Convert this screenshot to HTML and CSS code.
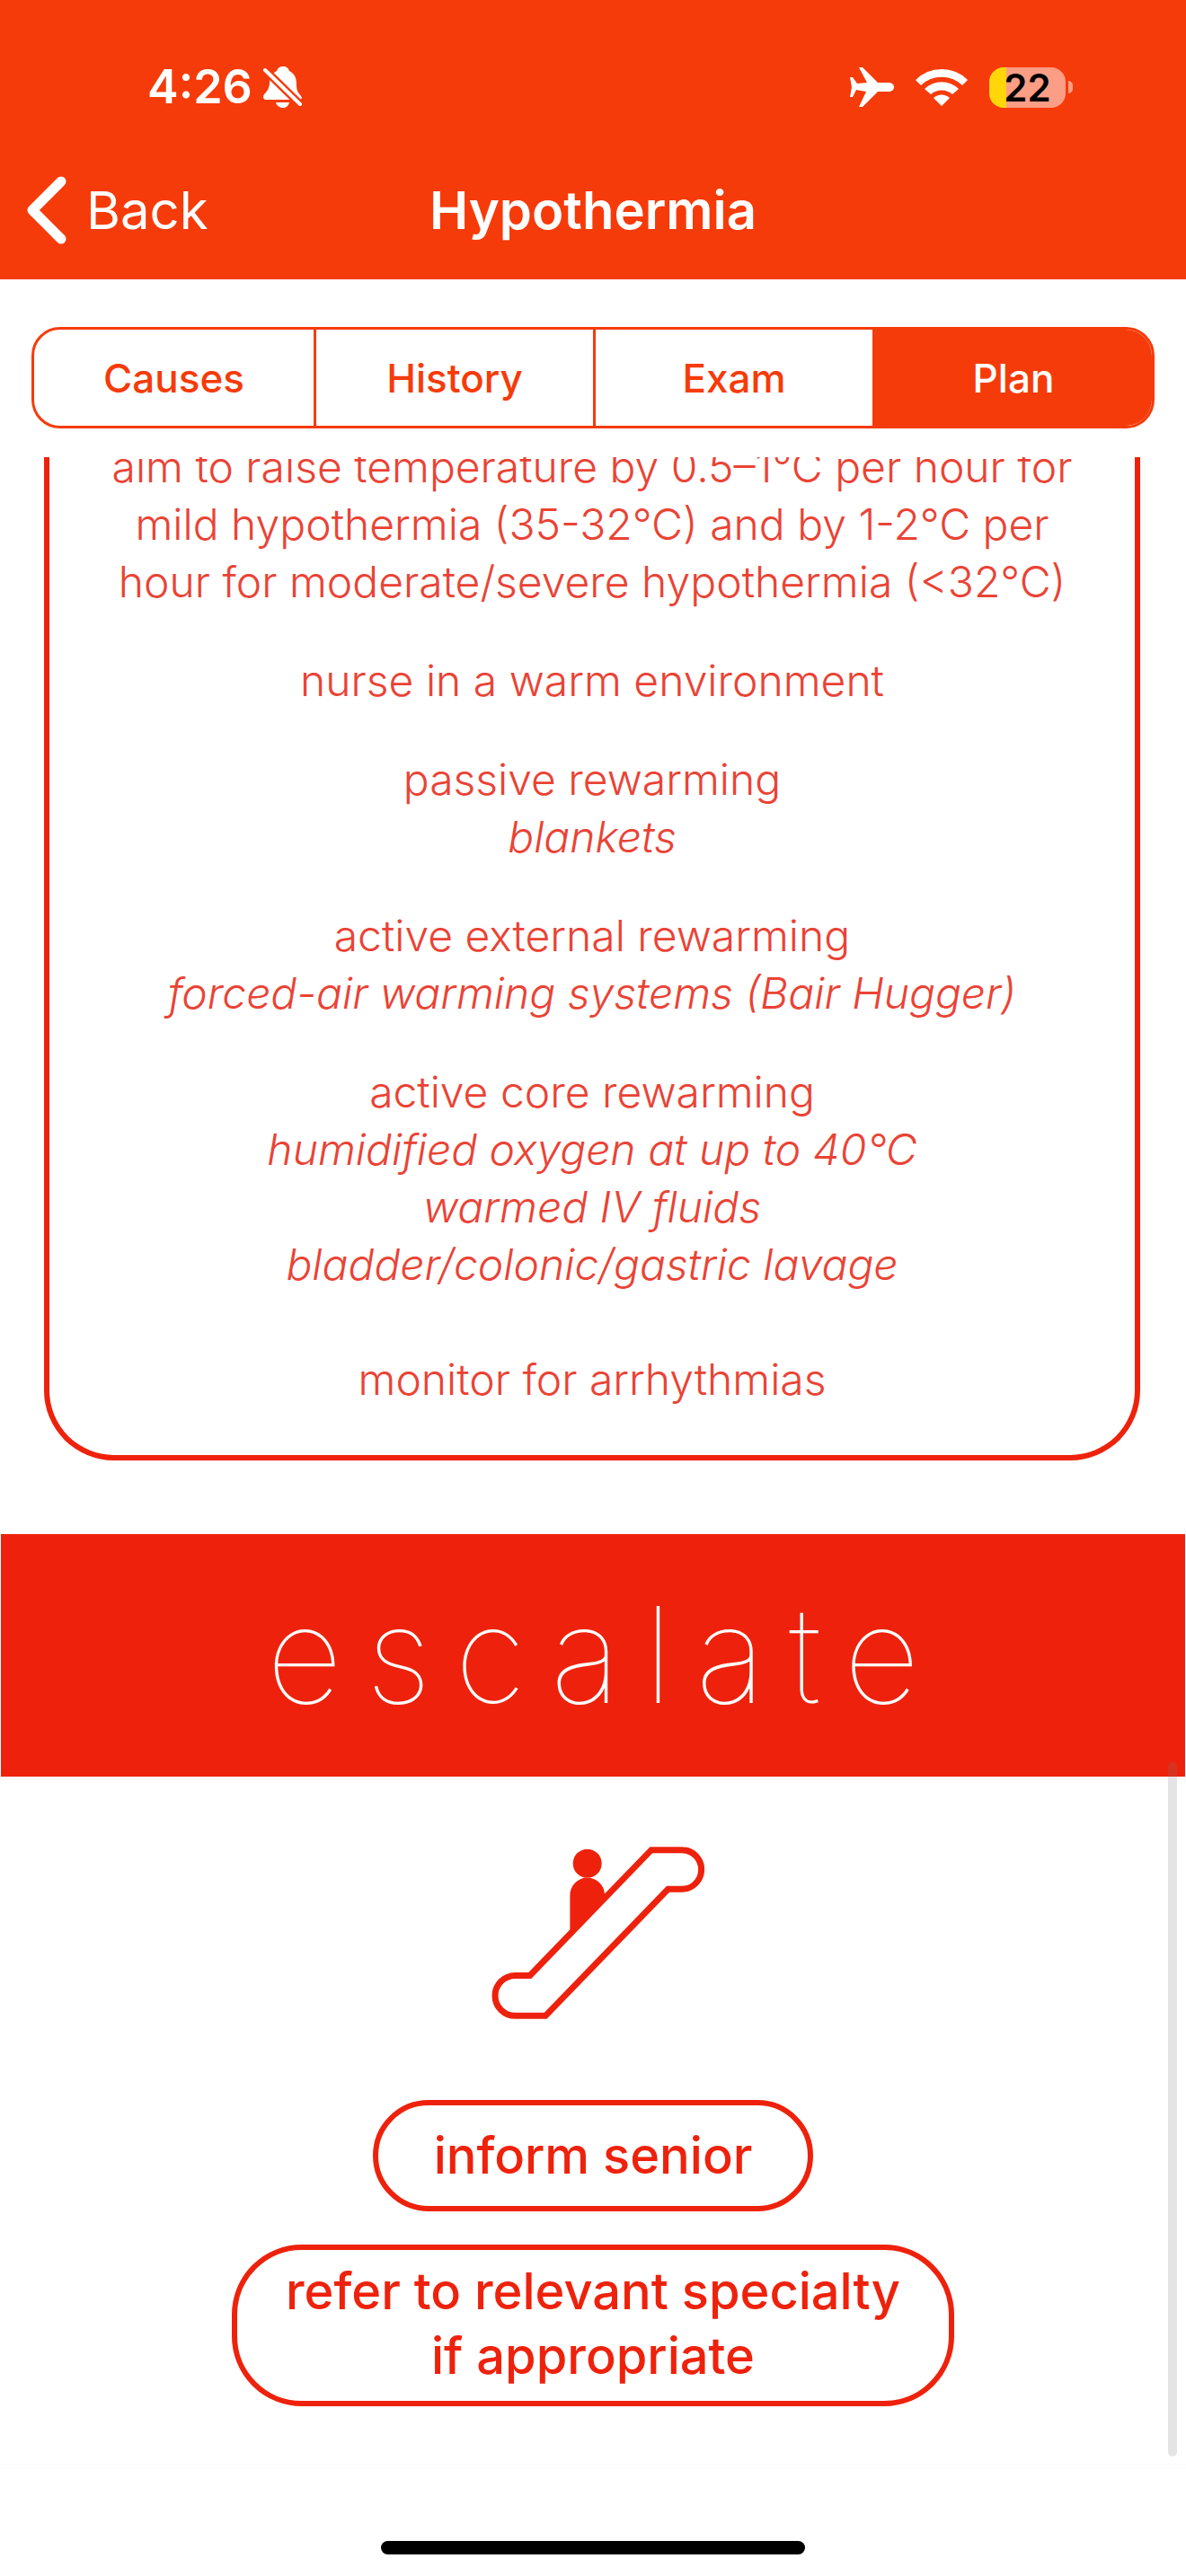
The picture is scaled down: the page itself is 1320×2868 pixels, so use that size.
FILE: index.html
```html
<!DOCTYPE html>
<html lang="en">
<head>
<meta charset="utf-8">
<meta name="viewport" content="width=device-width, initial-scale=1">
<title>Hypothermia</title>
<link rel="stylesheet" href="styles.css">
</head>
<body>
<header class="header">
  <div class="status">
    <div class="status-left">
      <span class="time">4:26</span>
      <svg class="bell" viewBox="0 0 44 46" aria-label="Silent">
        <path d="M22 0c4 0 6 2 7 5 6 3 8 8 8 15 0 8 2 9 5 13 2 3 0 4-3 4H4c-4 0-5-3-3-6 4-4 5-6 6-12C7 13 9 8 15 5c1-3 3-5 7-5Z" fill="#fff"/>
        <path d="M14 40h15c-1 4-4 6-7 6s-7-2-8-6Z" fill="#fff"/>
        <path d="M2 4 42 43" stroke="#f63b0a" stroke-width="9"/>
        <path d="M2 4 41 42" stroke="#fff" stroke-width="4" stroke-linecap="round"/>
      </svg>
    </div>
    <div class="status-right">
      <svg class="plane" viewBox="0 0 49 44" aria-label="Airplane mode">
        <path d="M0 11h3l5 7 11-1-9-17h4l17 17h12c8 0 8 10 0 10H31L14 44h-4l8-17-11-2-4 8H0l2-11Z" fill="#fff"/>
      </svg>
      <svg class="wifi" viewBox="0 0 58 42" aria-label="Wi-Fi">
        <path d="M0 13a41 41 0 0 1 58 0l-6 6a33 33 0 0 0-46 0Z M10 23a27 27 0 0 1 38 0l-7 6a18 18 0 0 0-24 0Z M20 33a13 13 0 0 1 18 0l-9 9Z" fill="#fff"/>
      </svg>
      <div class="battery"><span class="battery-cell">22</span><span class="battery-tip"></span></div>
    </div>
  </div>
  <nav class="navbar">
    <a class="back" href="#">
      <svg class="chevron" viewBox="0 0 44 76" aria-hidden="true"><path d="M38 6 6 38l32 32" fill="none" stroke="#fff" stroke-width="11" stroke-linecap="round" stroke-linejoin="round"/></svg>
      Back
    </a>
    <h1 class="title">Hypothermia</h1>
  </nav>
</header>

<div class="tabs">
  <button class="tab" type="button">Causes</button>
  <button class="tab" type="button">History</button>
  <button class="tab" type="button">Exam</button>
  <button class="tab tab-active" type="button" aria-pressed="true">Plan</button>
</div>

<main class="viewport">
  <section class="card">
    <p>aim to raise temperature by 0.5–1°C per hour for<br>mild hypothermia (35-32°C) and by 1-2°C per<br>hour for moderate/severe hypothermia (&lt;32°C)</p>
    <p>nurse in a warm environment</p>
    <p>passive rewarming<br><em>blankets</em></p>
    <p>active external rewarming<br><em>forced-air warming systems (Bair Hugger)</em></p>
    <p>active core rewarming<br><em>humidified oxygen at up to 40°C<br>warmed IV fluids<br>bladder/colonic/gastric lavage</em><br><br>monitor for arrhythmias</p>
  </section>
  <h2 class="band">escalate</h2>
  <section class="actions">
    <svg class="escalator" viewBox="48 107 744 577" aria-hidden="true">
      <g fill="#ee220c">
        <circle cx="401" cy="163" r="48"/>
        <path d="M343 390V272a57 57 0 0 1 116-6v12Z"/>
      </g>
      <path d="M615 118H717A65 65 0 0 1 717 249H671L261 673H160A67 67 0 0 1 160 538H209Z" fill="#fff" stroke="#ee220c" stroke-width="21"/>
    </svg>
    <button class="pill" type="button">inform senior</button>
    <button class="pill pill-wide" type="button">refer to relevant specialty<br>if appropriate</button>
  </section>
  <span class="scrollbar"></span>
</main>
<footer class="home"><span class="home-bar"></span></footer>
</body>
</html>
```
FILE: styles.css
```css
* { box-sizing: border-box; }
body {
  margin: 0;
  min-height: 100vh;
  display: flex;
  flex-direction: column;
  background: #fff;
  font-family: Inter, "Liberation Sans", sans-serif;
}
button { font: inherit; background: none; cursor: pointer; }

.header { background: #f63b0a; color: #fff; }
.status {
  display: flex;
  justify-content: space-between;
  align-items: center;
  height: 160px;
  padding: 34px 126px 0 164px;
}
.status-left { display: flex; align-items: center; gap: 12px; }
.time { font-size: 52px; font-weight: 600; line-height: 64px; }
.bell { width: 44px; height: 46px; }
.status-right { display: flex; align-items: center; gap: 24px; }
.plane { width: 49px; height: 44px; }
.wifi { width: 58px; height: 42px; }
.battery { display: flex; align-items: center; gap: 3px; }
.battery-cell {
  width: 85px;
  height: 45px;
  border-radius: 16px;
  background: linear-gradient(90deg, #ffd60a 22%, #fc9d85 22%);
  color: #000;
  font-size: 42px;
  font-weight: 600;
  line-height: 45px;
  text-align: center;
}
.battery-tip { width: 5px; height: 14px; border-radius: 0 5px 5px 0; background: #fc9d85; }

.navbar {
  display: grid;
  grid-template-columns: 1fr auto 1fr;
  align-items: center;
  height: 151px;
  padding: 0 30px 4px;
  font-size: 58px;
  line-height: 72px;
}
.back { display: flex; align-items: center; gap: 22px; color: inherit; text-decoration: none; }
.chevron { width: 44px; height: 76px; }
.title { margin: 0; font-size: 58px; font-weight: 600; }

.tabs {
  display: grid;
  grid-template-columns: repeat(4, 1fr);
  margin: 53px 35px 32px;
  border: 3px solid #f63b0a;
  border-radius: 32px;
  overflow: hidden;
}
.tab {
  height: 107px;
  padding: 0;
  border: 0;
  border-left: 3px solid #f63b0a;
  color: #f63b0a;
  font-size: 44px;
  font-weight: 500;
}
.tab:first-child { border-left: 0; }
.tab-active { background: #f63b0a; color: #fff; }

/* The list is shown scrolled, so its first line starts above the viewport. */
.viewport { position: relative; overflow: hidden; border-bottom: 1px solid #fafafa; }
.card {
  margin: -21px 51px 82px 49px;
  padding: 0 20px 52px;
  border: 6px solid #ee220c;
  border-top: 0;
  border-radius: 0 0 78px 78px;
  color: #ea4335;
  font-size: 48px;
  font-weight: 300;
  line-height: 64px;
  text-align: center;
}
.card p { margin: 0 0 46px; }
.card p:last-child { margin: 0; }

.band {
  margin: 0 1px;
  padding: 35px 0 35px 26px;
  background: #ee220c;
  color: #fff;
  font-size: 148px;
  font-weight: 100;
  line-height: 200px;
  letter-spacing: 26px;
  text-align: center;
}
.actions {
  display: flex;
  flex-direction: column;
  align-items: center;
  padding: 78px 30px 64px;
}
.escalator { width: 248px; height: 192px; margin-bottom: 90px; }
.pill {
  padding: 20px 62px;
  border: 6px solid #ee220c;
  border-radius: 78px;
  color: #ee220c;
  font-size: 56px;
  font-weight: 500;
  line-height: 72px;
}
.pill-wide { margin-top: 37px; padding: 10px 54px 14px; }
.scrollbar {
  position: absolute;
  right: 10px;
  bottom: 8px;
  width: 10px;
  height: 773px;
  border-radius: 5px;
  background: rgba(120, 120, 120, 0.2);
}
.home { display: flex; justify-content: center; margin-top: auto; padding: 16px 0 24px; }
.home-bar { width: 472px; height: 15px; border-radius: 8px; background: #000; }
```
